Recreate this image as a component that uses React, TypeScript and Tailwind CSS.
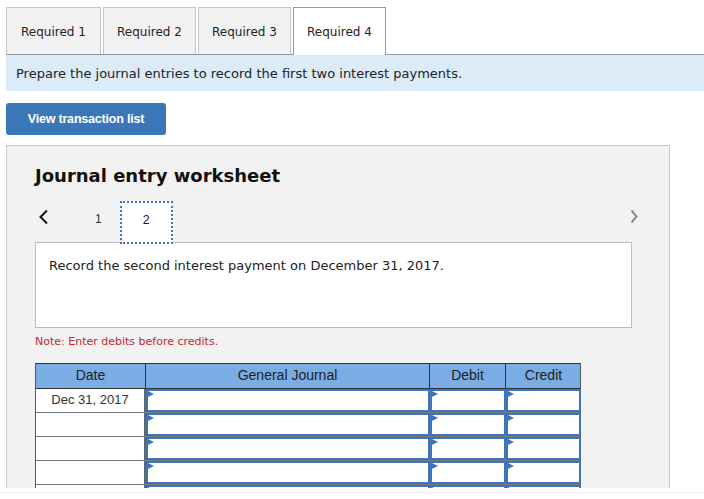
import React from 'react';

const tabs = ['Required 1', 'Required 2', 'Required 3', 'Required 4'];

const InputCell = () => (
  <div className="relative h-full border-2 border-[#3f74b8] bg-white">
    <span className="absolute left-0 top-0 h-0 w-0 border-y-[3px] border-l-[6px] border-y-transparent border-l-[#3f74b8]" />
  </div>
);

const Row = ({ date }: { date?: string }) => (
  <div className="grid h-[24px] grid-cols-[110px_284px_76px_75px] border-b border-[#777]">
    <div className="flex items-center justify-center border-r-2 border-[#666] text-[13px] text-[#333]">
      {date}
    </div>
    <InputCell />
    <InputCell />
    <InputCell />
  </div>
);

export default function App() {
  return (
    <div className="relative h-[499px] w-[704px] overflow-hidden bg-white" style={{ fontFamily: '"DejaVu Sans", Verdana, sans-serif' }}>
      <div className="h-[488px] overflow-hidden">
        {/* tabs */}
        <div className="ml-[6px] flex h-[55px] items-end gap-[2px] border-b border-[#9a9a9a]">
          {tabs.map((t, i) => (
            <div
              key={t}
              className={
                i === 3
                  ? '-mb-px flex h-[48px] w-[93px] items-center justify-center border border-b-0 border-[#9a9a9a] bg-white text-[12px] text-[#222]'
                  : 'flex h-[47px] items-center justify-center border border-b-0 border-[#c6c6c6] bg-[#f2f2f2] pt-[2px] text-[12px] text-[#222] ' + (i === 0 ? 'w-[95px]' : 'w-[93px]')
              }
            >
              {t}
            </div>
          ))}
        </div>

        {/* instruction banner */}
        <div className="ml-[6px] flex h-[36px] items-center bg-[#dbebf8] pl-[10px] pt-[2px] text-[13px] text-[#222]">
          Prepare the journal entries to record the first two interest payments.
        </div>

        <button
          className="ml-[6px] mt-[12px] flex h-[32px] w-[160px] items-center justify-center rounded-[3px] bg-[#3b77b8] text-[12.5px] font-bold tracking-[-0.2px] text-white"
          style={{ fontFamily: '"Liberation Sans", Arial, sans-serif' }}
        >
          View transaction list
        </button>

        {/* worksheet panel */}
        <div className="ml-[6px] mt-[10px] h-[400px] w-[664px] border border-[#c8c8c8] bg-[#f2f2f2] pl-[28px] pr-[37px]">
          <h2 className="pt-[18px] text-[18px] font-bold leading-[24px] text-[#111]">Journal entry worksheet</h2>

          <div className="relative mt-[13px] flex h-[41px] items-start">
            <svg className="ml-[3px] mt-[8px]" width="11" height="16" viewBox="0 0 11 16">
              <path d="M9 1.5 L2.5 8 L9 14.5" fill="none" stroke="#111" strokeWidth="2" />
            </svg>
            <span className="ml-[46px] mt-[9px] text-[12px] text-[#333]" style={{ fontFamily: '"Liberation Sans", Arial, sans-serif' }}>1</span>
            <div
              className="relative z-10 ml-[18px] flex h-[43px] w-[53px] items-center justify-center border-2 border-dotted border-[#3b77b8] bg-white text-[12.5px] text-[#222]"
              style={{ fontFamily: '"Liberation Sans", Arial, sans-serif' }}
            >
              <span className="-mt-[4px]">2</span>
            </div>
            <svg className="absolute right-[-6px] top-[8px]" width="8" height="15" viewBox="0 0 8 15">
              <path d="M1.5 1.5 L6.5 7.5 L1.5 13.5" fill="none" stroke="#8a8a8a" strokeWidth="2" />
            </svg>
          </div>

          <div className="h-[86px] border border-[#bdbdbd] bg-white pl-[13px] pt-[13px] text-[13px] text-[#222]">
            Record the second interest payment on December 31, 2017.
          </div>

          <p className="mt-[6px] text-[11px] text-[#c1272d]">Note: Enter debits before credits.</p>

          <div className="mt-[12px] w-[546px] border-l border-r border-[#555] bg-white" style={{ fontFamily: '"Liberation Sans", Arial, sans-serif' }}>
            <div className="grid h-[26px] grid-cols-[110px_284px_76px_75px] border-y border-[#333] bg-[#7aade3] text-[14px] text-[#222]">
              <div className="flex items-center justify-center border-r border-[#333]">Date</div>
              <div className="flex items-center justify-center border-r border-[#333]">General Journal</div>
              <div className="flex items-center justify-center border-r border-[#333]">Debit</div>
              <div className="flex items-center justify-center">Credit</div>
            </div>
            <Row date="Dec 31, 2017" />
            <Row />
            <Row />
            <Row />
            <Row />
          </div>
        </div>
      </div>
      <div className="mt-[4px] h-px w-full bg-[#eeeeee]" />
    </div>
  );
}
